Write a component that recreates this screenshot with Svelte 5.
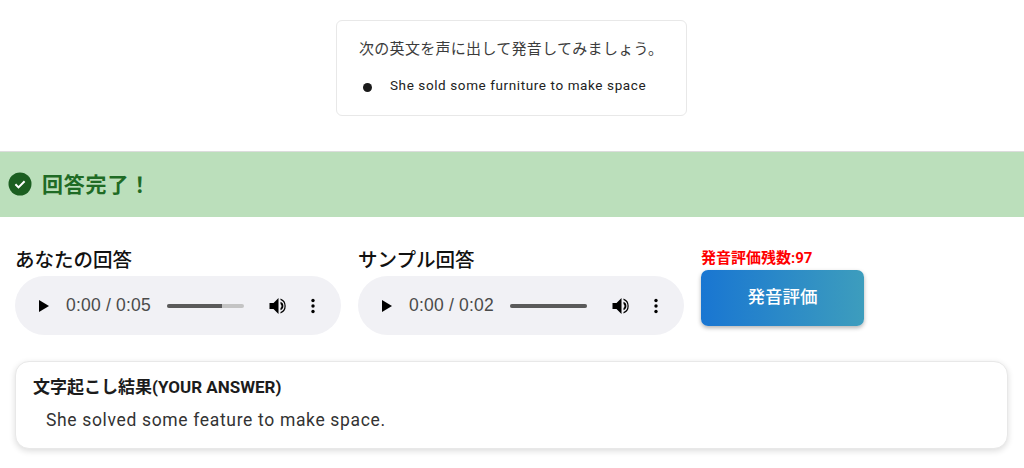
<script>
  const players = [
    { title: 'あなたの回答', time: '0:00 / 0:05', fill: 72, buffered: true },
    { title: 'サンプル回答', time: '0:00 / 0:02', fill: 100, buffered: false }
  ];
</script>

<main class="page">
  <section class="prompt-wrap">
    <div class="prompt">
      <p class="prompt-title">次の英文を声に出して発音してみましょう。</p>
      <div class="prompt-item">
        <span class="dot"></span>
        <span class="prompt-text">She sold some furniture to make space</span>
      </div>
    </div>
  </section>

  <section class="banner">
    <svg class="check" viewBox="0 0 24 24" width="24" height="24">
      <circle cx="12" cy="12" r="11.5" fill="#1b5e20" />
      <path d="M7.4 12.3l3.1 3.1 6.1-6.1" fill="none" stroke="#fff" stroke-width="2" />
    </svg>
    <span class="banner-text">回答完了！</span>
  </section>

  <section class="answers">
    {#each players as p}
      <div class="answer">
        <h3 class="answer-title">{p.title}</h3>
        <div class="player">
          <svg class="play" viewBox="0 0 12 14" width="12" height="14"><path d="M1 1v12l10-6z" fill="#000" /></svg>
          <span class="time">{p.time}</span>
          <div class="track">
            {#if p.buffered}<div class="buffer"></div>{/if}
            <div class="fill" style="width: {p.fill}%"></div>
          </div>
          <svg class="vol" viewBox="0 0 20 20" width="20" height="20">
            <path d="M1.500 7v6h4l5 5V2l-5 5z" fill="#000" />
            <path d="M12.500 5.800a4.500 4.500 0 0 1 0 8.400v-2.200a2.500 2.500 0 0 0 0-4z" fill="#000" />
            <path d="M12.500 2.500a8 8 0 0 1 0 15v-1.500a6.500 6.500 0 0 0 0-12z" fill="#000" />
          </svg>
          <svg class="more" viewBox="0 0 4 16" width="4" height="16">
            <circle cx="2" cy="2.500" r="1.700" fill="#000" />
            <circle cx="2" cy="8" r="1.700" fill="#000" />
            <circle cx="2" cy="13.500" r="1.700" fill="#000" />
          </svg>
        </div>
      </div>
    {/each}
    <div class="evaluate">
      <div class="remain">発音評価残数:97</div>
      <button class="eval-btn">発音評価</button>
    </div>
  </section>

  <section class="result">
    <h4 class="result-title">文字起こし結果(YOUR ANSWER)</h4>
    <p class="result-text">She solved some feature to make space.</p>
  </section>
</main>

<style>
  :global(body) {
    margin: 0;
    background: #fff;
    font-family: Roboto, "Noto Sans CJK JP", sans-serif;
  }
  .page {
    width: 1024px;
    height: 468px;
    overflow: hidden;
    box-sizing: border-box;
    padding-top: 20px;
  }
  .prompt-wrap {
    display: flex;
    justify-content: center;
    padding-right: 1px;
  }
  .prompt {
    width: 351px;
    height: 96px;
    box-sizing: border-box;
    border: 1px solid #e8e8e8;
    border-radius: 6px;
    padding: 18px 22px;
    color: #333;
  }
  .prompt-title {
    margin: 0;
    font-size: 15px;
    letter-spacing: 0.3px;
    line-height: 20px;
    color: #3c3c3c;
  }
  .prompt-item {
    display: flex;
    align-items: center;
    margin-top: 16px;
    height: 20px;
  }
  .dot {
    width: 9px;
    height: 9px;
    border-radius: 50%;
    background: #1a1a1a;
    margin: 5px 0 0 4px;
  }
  .prompt-text {
    margin-left: 18px;
    font-size: 13.500px;
    color: #222;
    letter-spacing: 0.6px;
    margin-bottom: 1px;
  }
  .banner {
    margin-top: 35px;
    height: 66px;
    box-sizing: border-box;
    border-top: 1px solid #dcdcdc;
    padding-bottom: 2px;
    background: #bbdfbb;
    display: flex;
    align-items: center;
    gap: 10px;
    padding-left: 8px;
  }
  .banner-text {
    font-size: 21px;
    font-weight: 700;
    color: #1f6b25;
    letter-spacing: 0.8px;
    margin-bottom: 2px;
  }
  .answers {
    display: flex;
    gap: 17px;
    padding: 31px 0 0 15px;
    height: 144px;
    box-sizing: border-box;
  }
  .answer {
    width: 326px;
  }
  .answer-title {
    margin: 0 0 3px;
    font-size: 19.500px;
    line-height: 25px;
    font-weight: 500;
    color: #111;
  }
  .player {
    height: 59px;
    width: 326px;
    border-radius: 30px;
    background: #f1f1f5;
    display: flex;
    align-items: center;
    box-sizing: border-box;
    padding-left: 23px;
  }
  .time {
    margin-left: 16px;
    font-family: "Liberation Sans", Arial, sans-serif;
    font-size: 17.500px;
    letter-spacing: 0.2px;
    color: #4a4a4a;
    width: 90px;
    white-space: nowrap;
  }
  .track {
    position: relative;
    margin-left: 11px;
    width: 77px;
    height: 4px;
    border-radius: 2px;
    background: #c4c4c4;
    overflow: hidden;
  }
  .fill {
    position: absolute;
    left: 0;
    top: 0;
    bottom: 0;
    background: #5a5a5a;
  }
  .vol {
    margin-left: 24px;
  }
  .more {
    margin-left: 23px;
  }
  .evaluate {
    width: 163px;
    margin-top: -3px;
  }
  .remain {
    font-size: 15px;
    line-height: 18px;
    padding-top: 4px;
    font-weight: 700;
    color: #ff0000;
    white-space: nowrap;
  }
  .eval-btn {
    display: block;
    margin-top: 3px;
    width: 163px;
    height: 56px;
    border: 0;
    padding: 0 0 5px;
    border-radius: 7px;
    background: linear-gradient(90deg, #1976d2, #3d9dbd);
    box-shadow: 0 2px 4px rgba(0, 0, 0, 0.3);
    color: #fff;
    font-family: inherit;
    font-size: 17.500px;
    font-weight: 500;
  }
  .result {
    margin: 0 16px 0 15px;
    height: 88px;
    box-sizing: border-box;
    border: 1px solid #e8e8e8;
    border-radius: 14px;
    box-shadow: 0 2px 6px rgba(0, 0, 0, 0.14);
    background: #fff;
    padding: 14px 17px;
  }
  .result-title {
    margin: 0;
    font-size: 17px;
    line-height: 22px;
    font-weight: 700;
    color: #1c1c1c;
  }
  .result-text {
    margin: 11px 0 0 13px;
    font-size: 17.500px;
    line-height: 22px;
    color: #333;
    letter-spacing: 0.66px;
  }
</style>
